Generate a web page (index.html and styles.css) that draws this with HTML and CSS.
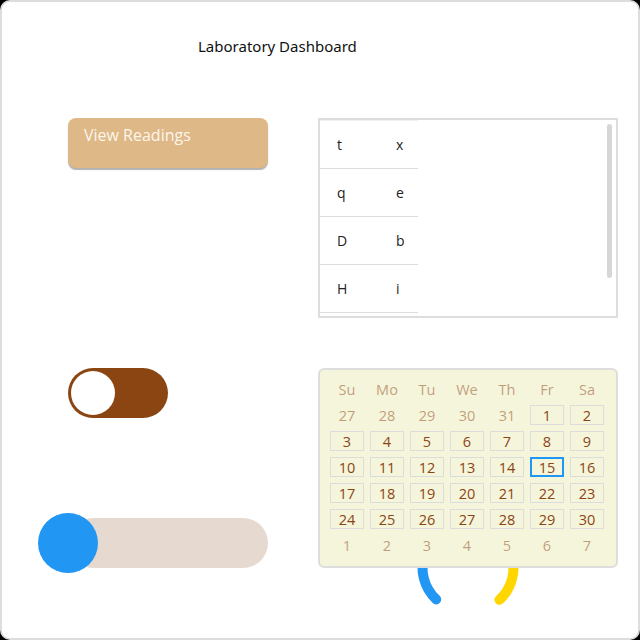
FILE: index.html
```html
<!DOCTYPE html>
<html lang="en">
<head>
<meta charset="utf-8">
<title>Laboratory Dashboard</title>
<link rel="stylesheet" href="styles.css">
</head>
<body>
<div class="page">
  <h1 class="title">Laboratory Dashboard</h1>
  <div class="grid">
    <div class="cell">
      <button class="btn">View Readings</button>
    </div>
    <div class="listbox">
      <table class="list">
        <tr><td>t</td><td>x</td></tr>
        <tr><td>q</td><td>e</td></tr>
        <tr><td>D</td><td>b</td></tr>
        <tr><td>H</td><td>i</td></tr>
      </table>
      <div class="thumb"></div>
    </div>
    <div class="cell controls">
      <div class="toggle"><div class="knob"></div></div>
      <div class="slider"><div class="slider-knob"></div></div>
    </div>
    <div class="cal-wrap">
      <svg class="spinner" width="120" height="120" viewBox="0 0 120 120">
        <path d="M 16.6 45 A 44 44 0 0 0 28.2 90.4" fill="none" stroke="#2196f3" stroke-width="10" stroke-linecap="round"/>
        <path d="M 103.4 45 A 44 44 0 0 1 91.4 90.8" fill="none" stroke="#ffd600" stroke-width="10" stroke-linecap="round"/>
      </svg>
      <div class="calendar">
        <div class="hd">Su</div><div class="hd">Mo</div><div class="hd">Tu</div><div class="hd">We</div><div class="hd">Th</div><div class="hd">Fr</div><div class="hd">Sa</div>
        <div class="d o">27</div><div class="d o">28</div><div class="d o">29</div><div class="d o">30</div><div class="d o">31</div><div class="d">1</div><div class="d">2</div>
        <div class="d">3</div><div class="d">4</div><div class="d">5</div><div class="d">6</div><div class="d">7</div><div class="d">8</div><div class="d">9</div>
        <div class="d">10</div><div class="d">11</div><div class="d">12</div><div class="d">13</div><div class="d">14</div><div class="d sel">15</div><div class="d">16</div>
        <div class="d">17</div><div class="d">18</div><div class="d">19</div><div class="d">20</div><div class="d">21</div><div class="d">22</div><div class="d">23</div>
        <div class="d">24</div><div class="d">25</div><div class="d">26</div><div class="d">27</div><div class="d">28</div><div class="d">29</div><div class="d">30</div>
        <div class="d o">1</div><div class="d o">2</div><div class="d o">3</div><div class="d o">4</div><div class="d o">5</div><div class="d o">6</div><div class="d o">7</div>
      </div>
    </div>
  </div>
</div>
</body>
</html>
```
FILE: styles.css
```css
html { background: #000; }
body { margin: 0; }
.page {
  width: 640px;
  height: 640px;
  box-sizing: border-box;
  border: 2px solid #dddddd;
  border-radius: 10px;
  background: #fff;
  padding: 0 0 0 66px;
  overflow: hidden;
}
.title {
  margin: 0;
  padding: 34px 0 0 130px;
  height: 20px;
  font-family: "Noto Sans", sans-serif;
  font-size: 15px;
  line-height: 20px;
  font-weight: 400;
  color: #111;
}
.grid {
  margin-top: 62px;
  display: grid;
  grid-template-columns: 200px 300px;
  grid-template-rows: 200px 200px;
  column-gap: 50px;
  row-gap: 50px;
}
.btn {
  display: block;
  width: 200px;
  height: 50px;
  border: 0;
  border-radius: 8px;
  background: #deb887;
  box-shadow: 0 2px 1px rgba(0,0,0,0.3);
  color: #fdf6ec;
  font-family: "Open Sans", sans-serif;
  font-size: 16px;
  text-align: left;
  padding: 0 16px 20px;
  line-height: 34px;
}
.listbox {
  position: relative;
  box-sizing: border-box;
  border: 2px solid #dddddd;
  overflow: hidden;
}
.list {
  border-collapse: collapse;
  width: 98px;
  border-top: 1px solid #f0f0f0;
  font-family: "Open Sans", sans-serif;
  font-size: 14px;
  color: #222;
}
.list td {
  height: 47px;
  border-bottom: 1px solid #dddddd;
  padding: 0 0 0 17px;
}
.list td:first-child { width: 42px; }
.thumb {
  position: absolute;
  top: 4px;
  right: 4px;
  width: 5px;
  height: 154px;
  border-radius: 3px;
  background: #d6d6d6;
}
.controls {
  display: flex;
  flex-direction: column;
  justify-content: space-between;
}
.toggle {
  width: 100px;
  height: 50px;
  box-sizing: border-box;
  border-radius: 25px;
  background: #8b4513;
  padding: 3px;
}
.knob {
  width: 44px;
  height: 44px;
  border-radius: 50%;
  background: #fff;
}
.slider {
  position: relative;
  width: 200px;
  height: 50px;
  border-radius: 25px;
  background: #e6d9cf;
}
.slider-knob {
  position: absolute;
  left: -30px;
  top: -5px;
  width: 60px;
  height: 60px;
  border-radius: 50%;
  background: #2196f3;
}
.cal-wrap { position: relative; }
.spinner {
  position: absolute;
  left: 89.5px;
  top: 141px;
}
.calendar {
  position: relative;
  box-sizing: border-box;
  height: 200px;
  border: 2px solid #dddddd;
  border-radius: 6px;
  background: #f5f5dc;
  padding: 6px 9px 8px 7px;
  display: grid;
  grid-template-columns: repeat(7, 40px);
  grid-auto-rows: 26px;
  font-family: "Open Sans", sans-serif;
  font-size: 14.5px;
  color: #8b4513;
}
.hd, .d {
  display: flex;
  align-items: center;
  justify-content: center;
}
.hd { color: rgba(139,69,19,0.5); }
.d {
  margin: 3px;
  border: 1px solid #dcdcdc;
}
.d.o {
  border-color: transparent;
  color: rgba(139,69,19,0.5);
}
.d.sel { border: 2px solid #2196f3; }
```
